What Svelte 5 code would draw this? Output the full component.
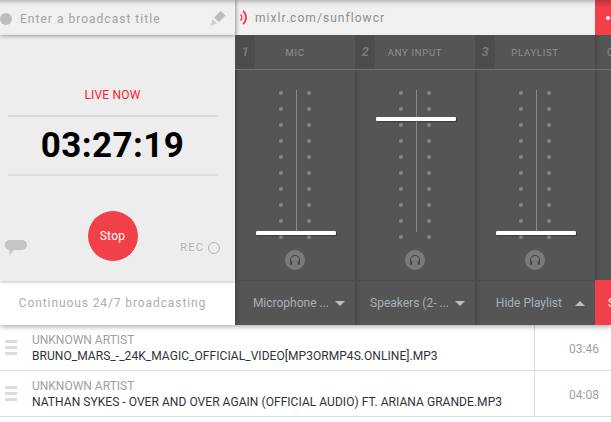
<script>
  const channels = [
    { num: '1', label: 'MIC', level: 233, select: 'Microphone ...', arrow: 'down' },
    { num: '2', label: 'ANY INPUT', level: 119, select: 'Speakers (2- ...', arrow: 'down' },
    { num: '3', label: 'PLAYLIST', level: 233, select: 'Hide Playlist', arrow: 'up' }
  ];
  const dots = Array.from({ length: 10 });
  const tracks = [
    { artist: 'UNKNOWN ARTIST', title: 'BRUNO_MARS_-_24K_MAGIC_OFFICIAL_VIDEO[MP3ORMP4S.ONLINE].MP3', time: '03:46' },
    { artist: 'UNKNOWN ARTIST', title: 'NATHAN SYKES - OVER AND OVER AGAIN (OFFICIAL AUDIO) FT. ARIANA GRANDE.MP3', time: '04:08' }
  ];
</script>

<div class="page">
  <div class="deck">
    <div class="left">
      <div class="title-bar">
        <span class="status-dot"></span>
        <span class="title-text">Enter a broadcast title</span>
        <svg class="pencil" width="16" height="16" viewBox="0 0 16 16">
          <path d="M10.5 0l5 4.5-6.5 6.5-5-4.500z" fill="#bdbdbd" />
          <path d="M2.500 8l4.500 4.200-6.500 2.800z" fill="#cfcfcf" />
        </svg>
      </div>
      <div class="timer-panel">
        <div class="live">LIVE NOW</div>
        <div class="clock">03:27:19</div>
        <div class="controls">
          <svg class="bubble" width="22" height="17" viewBox="0 0 22 17">
            <path d="M5 0h12a5 5 0 0 1 0 10h-8l-4.500 5v-5a5 5 0 0 1 .5-10z" fill="#c4c4c4" />
          </svg>
          <button class="stop">Stop</button>
          <div class="rec">REC <span class="rec-ring"></span></div>
        </div>
      </div>
      <div class="mode">Continuous 24/7 broadcasting</div>
    </div>

    <div class="right">
      <div class="url-bar">
        <div class="url">
          <svg width="8" height="15" viewBox="0 0 8 15">
            <path d="M0.500 4.500a4 4 0 0 1 0 6" fill="none" stroke="#f2404a" stroke-width="1.500" />
            <path d="M3 0.800a9 9 0 0 1 0 13.400" fill="none" stroke="#f2404a" stroke-width="1.800" />
          </svg>
          <span>mixlr.com/sunflowcr</span>
        </div>
        <div class="red-tab"><span class="white-dot"></span></div>
      </div>
      <div class="mixer">
        {#each channels as ch}
          <div class="channel">
            <div class="ch-head">
              <span class="ch-num">{ch.num}</span>
              <span class="ch-label">{ch.label}</span>
            </div>
            <div class="ch-body">
              <div class="track">
                <div class="dots">{#each dots as _}<i></i>{/each}</div>
                <div class="rail"></div>
                <div class="dots">{#each dots as _}<i></i>{/each}</div>
                <div class="fader" style="top: {ch.level - 90 - 2}px"></div>
              </div>
              <div class="phones">
                <svg width="12" height="12" viewBox="0 0 12 12">
                  <path d="M1.500 8V6a4.500 4.500 0 0 1 9 0v2" fill="none" stroke="#484848" stroke-width="1.100" />
                  <rect x="1" y="7" width="2.200" height="4" rx="1" fill="#484848" />
                  <rect x="8.800" y="7" width="2.200" height="4" rx="1" fill="#484848" />
                </svg>
              </div>
            </div>
            <div class="ch-foot">
              <span class="select">{ch.select}</span>
              <span class="arrow {ch.arrow}"></span>
            </div>
          </div>
        {/each}
        <div class="channel last">
          <div class="ch-head"><span class="peek">C</span></div>
          <div class="ch-body"></div>
          <div class="ch-foot red"><span class="peek-s">S</span></div>
        </div>
      </div>
    </div>
  </div>

  <div class="list">
    {#each tracks as t}
      <div class="row">
        <div class="handle"><i></i><i></i><i></i></div>
        <div class="info">
          <div class="artist">{t.artist}</div>
          <div class="name">{t.title}</div>
        </div>
        <div class="time">{t.time}</div>
      </div>
    {/each}
  </div>
</div>

<style>
  :global(body) {
    margin: 0;
    background: #fff;
  }
  .page {
    width: 611px;
    height: 422px;
    overflow: hidden;
    font-family: Roboto, "Liberation Sans", sans-serif;
  }
  .deck {
    display: flex;
    height: 325px;
    box-shadow: 0 2px 5px rgba(0, 0, 0, 0.3);
    position: relative;
  }
  .left {
    width: 235px;
    flex: none;
    display: flex;
    flex-direction: column;
    background: #ededed;
  }
  .title-bar {
    height: 35px;
    flex: none;
    display: flex;
    align-items: center;
    background: linear-gradient(#bbb 0, #e8e8e8 4px, #f0f0f0 7px);
    box-shadow: 0 1px 4px rgba(0, 0, 0, 0.35);
    position: relative;
    padding-top: 3px;
    box-sizing: border-box;
  }
  .status-dot {
    width: 12px;
    height: 12px;
    border-radius: 50%;
    background: #bdbdbd;
  }
  .title-text {
    margin-left: 8px;
    font-size: 12px;
    letter-spacing: 1.02px;
    color: #a3a3a3;
    flex: 1;
  }
  .pencil {
    margin-right: 9px;
  }
  .timer-panel {
    flex: 1;
    display: flex;
    flex-direction: column;
    align-items: center;
    padding-right: 10px;
    box-shadow: 0 1px 3px rgba(0, 0, 0, 0.25);
    position: relative;
  }
  .live {
    margin-top: 53px;
    font-size: 12px;
    color: #f9202f;
    letter-spacing: 0.2px;
    line-height: 14px;
    width: 210px;
    text-align: center;
    padding-bottom: 13px;
    border-bottom: 2px solid #dcdcdc;
  }
  .clock {
    width: 210px;
    height: 57px;
    line-height: 57px;
    font-size: 35px;
    font-weight: 700;
    text-align: center;
    color: #000;
    letter-spacing: 0.4px;
    border-bottom: 2px solid #dcdcdc;
  }
  .controls {
    width: 100%;
    position: relative;
    display: flex;
    justify-content: center;
    margin-top: 35px;
  }
  .bubble {
    position: absolute;
    left: 5px;
    top: 29px;
  }
  .stop {
    width: 50px;
    height: 50px;
    border: none;
    border-radius: 50%;
    background: #f2404a;
    color: #fff;
    font: inherit;
    font-size: 12px;
    letter-spacing: 0.3px;
    padding: 0;
  }
  .rec {
    position: absolute;
    right: 5px;
    top: 30px;
    display: flex;
    align-items: center;
    gap: 4px;
    font-size: 11px;
    letter-spacing: 1.2px;
    color: #b3b3b3;
  }
  .rec-ring {
    width: 10px;
    height: 10px;
    border: 1px solid #b3b3b3;
    border-radius: 50%;
  }
  .mode {
    height: 44px;
    flex: none;
    display: flex;
    align-items: center;
    justify-content: center;
    padding-right: 10px;
    background: #fff;
    font-size: 12px;
    letter-spacing: 0.9px;
    color: #a9adb5;
  }
  .right {
    flex: 1;
    display: flex;
    flex-direction: column;
    min-width: 0;
  }
  .url-bar {
    height: 35px;
    flex: none;
    display: flex;
    background: linear-gradient(#bbb 0, #e8e8e8 4px, #f0f0f0 7px);
    box-shadow: inset 4px 0 4px -3px rgba(0, 0, 0, 0.2);
  }
  .url {
    flex: 1;
    display: flex;
    align-items: center;
    gap: 7px;
    padding-left: 5px;
    font-size: 12px;
    letter-spacing: 1.05px;
    color: #8e8e8e;
  }
  .red-tab {
    width: 16px;
    flex: none;
    background: linear-gradient(#b5343b 0, #f2404a 7px);
    display: flex;
    align-items: center;
    padding-left: 11px;
    box-sizing: border-box;
  }
  .white-dot {
    width: 4px;
    height: 4px;
    border-radius: 50%;
    background: #fff;
  }
  .mixer {
    flex: 1;
    display: flex;
    background: #555;
  }
  .channel {
    width: 120px;
    flex: none;
    display: flex;
    flex-direction: column;
    box-shadow: inset 5px 0 5px -4px rgba(0, 0, 0, 0.25);
  }
  .channel.last {
    width: 16px;
    overflow: hidden;
  }
  .ch-head {
    height: 34px;
    display: flex;
    align-items: center;
    justify-content: center;
    position: relative;
    border-bottom: 1px solid #757575;
    flex: none;
  }
  .ch-num {
    position: absolute;
    left: 0;
    top: 0;
    width: 20px;
    height: 34px;
    line-height: 34px;
    background: #4c4c4c;
    text-align: center;
    font-size: 13px;
    font-weight: 700;
    font-style: italic;
    color: #777;
  }
  .ch-label {
    font-size: 9.5px;
    letter-spacing: 0.7px;
    color: #8f8f8f;
  }
  .peek {
    position: absolute;
    left: 12px;
    font-size: 10px;
    color: #8f8f8f;
  }
  .ch-body {
    flex: 1;
    display: flex;
    flex-direction: column;
    align-items: center;
  }
  .track {
    position: relative;
    width: 80px;
    height: 150px;
    margin-top: 20px;
    display: flex;
    justify-content: center;
    gap: 11px;
  }
  .dots {
    display: flex;
    flex-direction: column;
    gap: 12px;
    padding-top: 1px;
  }
  .dots i {
    display: block;
    width: 4px;
    height: 4px;
    border-radius: 50%;
    background: #868686;
  }
  .rail {
    width: 1px;
    height: 142px;
    margin: 0 -1px 0 2px;
    background: #8a8a8a;
  }
  .fader {
    position: absolute;
    left: 1px;
    width: 80px;
    height: 4px;
    border-radius: 1px;
    background: #fff;
    box-shadow: 1px 1px 1px rgba(0, 0, 0, 0.3);
  }
  .phones {
    width: 20px;
    height: 20px;
    margin-top: 10px;
    border-radius: 50%;
    background: #7a7a7a;
    display: flex;
    align-items: center;
    justify-content: center;
  }
  .ch-foot {
    height: 45px;
    flex: none;
    display: flex;
    align-items: center;
    justify-content: flex-end;
    gap: 6px;
    padding-right: 10px;
    border-top: 1px solid #4d4d4d;
    box-sizing: border-box;
  }
  .ch-foot.red {
    background: #f2404a;
    border: none;
    color: #fff;
    justify-content: flex-start;
    padding-left: 13px;
    font-size: 12px;
  }
  .select {
    font-size: 12px;
    color: #a8b0b8;
  }
  .arrow {
    width: 0;
    height: 0;
    border-left: 5px solid transparent;
    border-right: 5px solid transparent;
  }
  .arrow.down {
    border-top: 5px solid #bdbdbd;
  }
  .arrow.up {
    border-bottom: 5px solid #bdbdbd;
    margin-left: 7px;
  }
  .list {
    background: #fff;
  }
  .row {
    height: 46px;
    display: flex;
    border-bottom: 1px solid #ddd;
    box-sizing: border-box;
  }
  .handle {
    width: 32px;
    flex: none;
    display: flex;
    flex-direction: column;
    gap: 3px;
    padding: 15px 0 0 5px;
    box-sizing: border-box;
  }
  .handle i {
    display: block;
    width: 12px;
    height: 3px;
    background: #dcdcdc;
  }
  .info {
    flex: 1;
    min-width: 0;
    padding-top: 8px;
  }
  .artist {
    font-size: 12px;
    line-height: 15px;
    color: #a0a0a0;
  }
  .name {
    margin-top: 1px;
    font-size: 12px;
    line-height: 15px;
    color: #2f3338;
    white-space: nowrap;
    letter-spacing: 0.05px;
  }
  .time {
    width: 77px;
    flex: none;
    border-left: 1px solid #ddd;
    box-sizing: border-box;
    padding: 17px 0 0 34px;
    font-size: 12px;
    color: #a0a0a0;
  }
</style>
